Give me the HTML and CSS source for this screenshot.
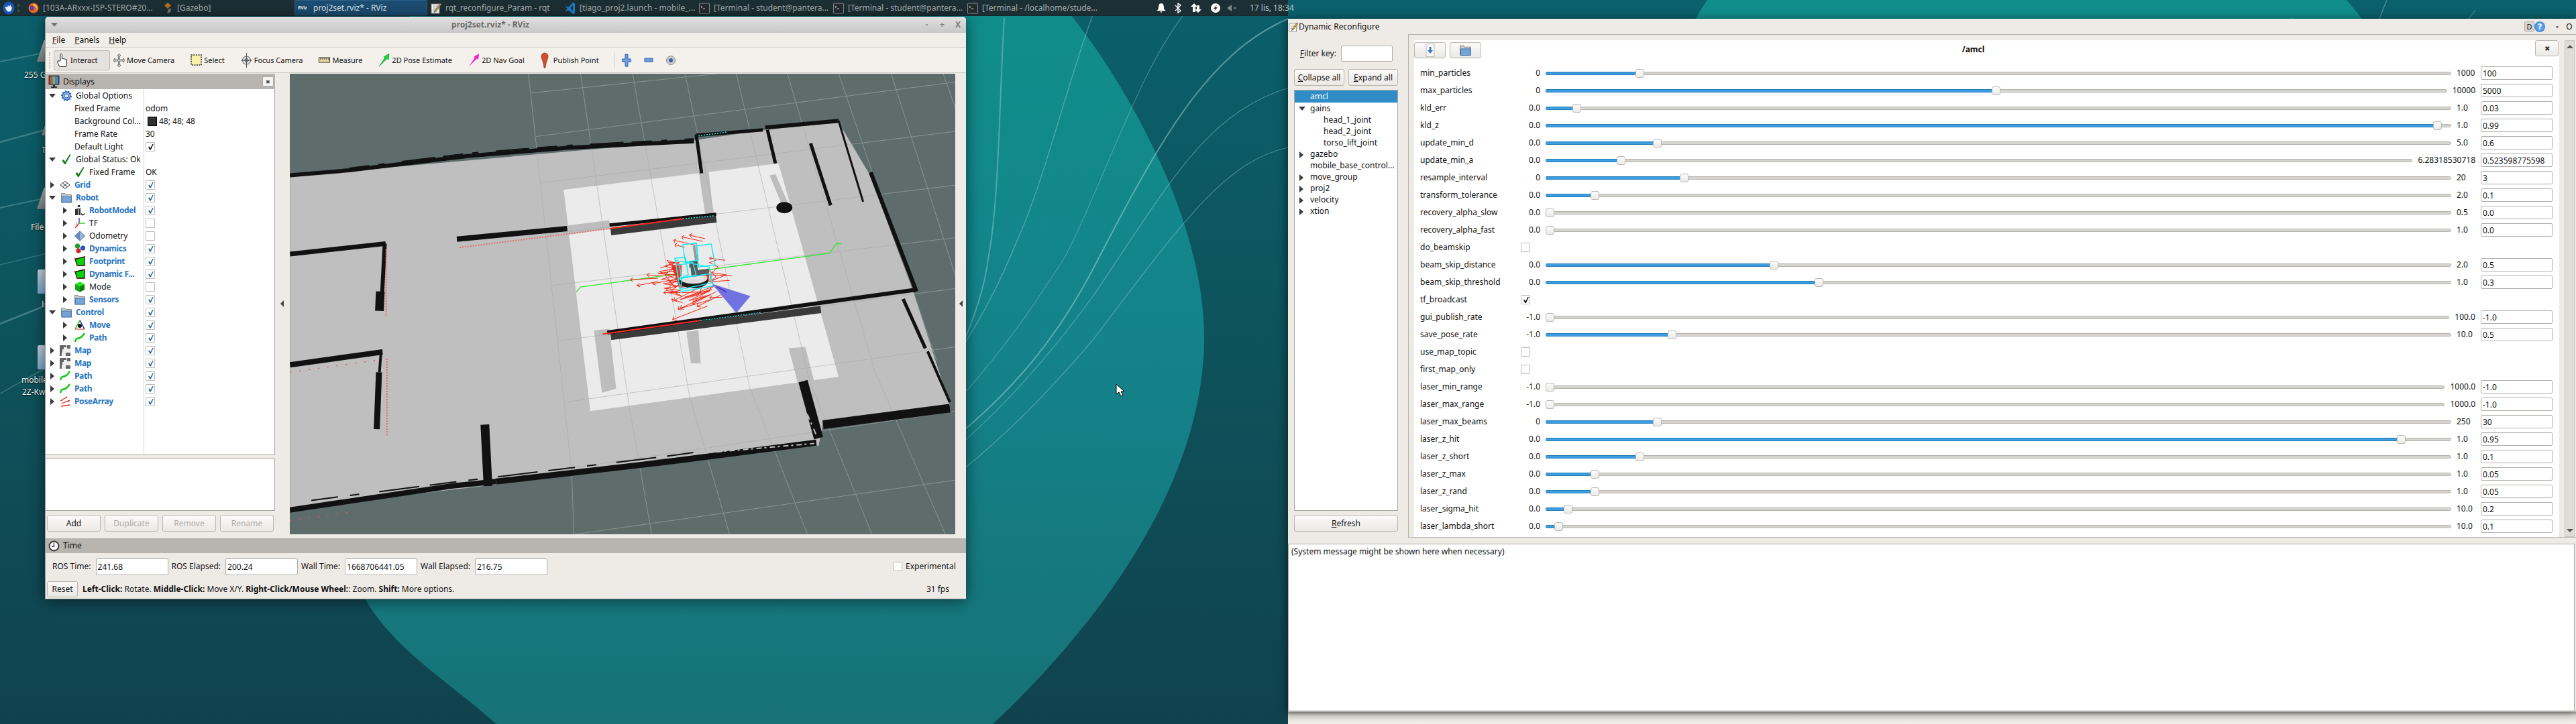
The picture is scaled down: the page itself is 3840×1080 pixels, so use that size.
FILE: index.html
```html
<!DOCTYPE html>
<html lang="en">
<head>
<meta charset="utf-8">
<title>Desktop</title>
<link rel="stylesheet" href="styles.css">
</head>
<body>
<svg class="defs" width="0" height="0">
<defs>
<linearGradient id="bgGrad" x1="0" y1="0" x2="0" y2="1"><stop offset="0" stop-color="#0a606c"/><stop offset=".55" stop-color="#0e5059"/><stop offset="1" stop-color="#10424e"/></linearGradient>
<linearGradient id="blobGrad" x1="0" y1="0" x2="0" y2="1"><stop offset="0" stop-color="#108e8b"/><stop offset=".5" stop-color="#14828a"/><stop offset="1" stop-color="#167276"/></linearGradient>
<symbol id="i-gear" viewBox="0 0 16 16"><circle cx="8" cy="8" r="6" fill="#8fb4e6" stroke="#2a62b5" stroke-width="1.5"/><circle cx="8" cy="8" r="7.2" fill="none" stroke="#2a62b5" stroke-width="1.6" stroke-dasharray="2 2.5"/><circle cx="8" cy="8" r="3" fill="#dbe8f8" stroke="#2a62b5"/></symbol>
<symbol id="i-check" viewBox="0 0 16 16"><path d="M1.5 9.5 4 8l2 3L13 0l1.5 1L6.5 15H5z" fill="#1c7f1c"/></symbol>
<symbol id="i-grid" viewBox="0 0 16 16"><path d="M8 2.5 15 8l-7 5.5L1 8zM4.5 5.3 11.5 10.8M11.500 5.300 4.500 10.800" fill="none" stroke="#333" stroke-width="1"/></symbol>
<symbol id="i-folder" viewBox="0 0 16 16"><path d="M.5 15V1.500h5l1 2h9V15z" fill="#c7cbd0" stroke="#777" stroke-width=".8"/><rect x="1.500" y="6" width="13.800" height="9" fill="#76a3d8" stroke="#3b6ea8" stroke-width=".8"/></symbol>
<symbol id="i-robot" viewBox="0 0 16 16"><path d="M5 0h3v2H5z" fill="#223"/><path d="M3 4h7v1H3zM1 6h4v9H1zM6 6h3v9H6z" fill="#333"/><path d="M10 11c1 3 3 3 5 1l1 1c-2 3-6 3-6 1z" fill="#444"/><rect x="4" y="2" width="5" height="1" fill="#669"/></symbol>
<symbol id="i-tf" viewBox="0 0 16 16"><path d="M7 8V0" stroke="#22c" stroke-width="1.300"/><path d="M7 8h9" stroke="#1c1" stroke-width="1.300"/><path d="M7 8 1 15" stroke="#e22" stroke-width="1.300"/><path d="M2 7l3 6M4 6l-2 6" stroke="#c33" stroke-width=".7" opacity=".7"/></symbol>
<symbol id="i-odom" viewBox="0 0 16 16"><path d="M8 1 15.500 8 8 15 .5 8z" fill="#9db4dc" stroke="#34568c"/><path d="M8 1v14L.5 8z" fill="#6b87ba"/></symbol>
<symbol id="i-dyn" viewBox="0 0 16 16"><path d="M1 2 4.500 0 8 2v4L4.500 8 1 6z" fill="#1f9d24"/><path d="M9 5l3.500-2L16 5v4l-3.500 2L9 9z" fill="#2c50c8"/><path d="M2.500 9 6 7l3.500 2v4L6 15l-3.500-2z" fill="#d22525"/></symbol>
<symbol id="i-foot" viewBox="0 0 16 16"><path d="M1 4.500 15 1v13H4z" fill="#0ad10a" stroke="#111" stroke-width="1.300"/><path d="M0 3h2v2H0zM14 0h2v2h-2zM14 13h2v2h-2zM3 13h2v2H3z" fill="#e11"/></symbol>
<symbol id="i-cube" viewBox="0 0 16 16"><path d="M8 .5 15 4v8l-7 3.500L1 12V4z" fill="#0fbf0f"/><path d="M1 4l7 3.500v8L1 12z" fill="#17a317"/><path d="M15 4 8 7.500v8l7-3.500z" fill="#087d08"/><path d="M8 .5 15 4 8 7.500 1 4z" fill="#22e822"/></symbol>
<symbol id="i-move" viewBox="0 0 16 16"><path d="M8 1 15 14H1z" fill="#fff" stroke="#d22" stroke-width="1"/><path d="M8 1 1 14" stroke="#1c1" stroke-width="1.500"/><path d="M8 1l7 13" stroke="#23c" stroke-width="1.500"/><circle cx="8" cy="9" r="3" fill="#111"/></symbol>
<symbol id="i-path" viewBox="0 0 16 16"><path d="M1 14c1-6 4-5 7-6s4-3 7-7" fill="none" stroke="#0bc90b" stroke-width="2.400"/></symbol>
<symbol id="i-map" viewBox="0 0 16 16"><rect width="16" height="16" fill="#eee"/><path d="M0 0h6v6H0zM6 0h4v3H6zM11 0h5v5h-5zM0 6h4v5H0zM9 11h7v5H9zM0 11h3v5H0z" fill="#666"/></symbol>
<symbol id="i-pose" viewBox="0 0 16 16"><path d="M1 7 11 1 9 3M3 11 15 6 12 8.500M2 15l13-2-3 1M1 7l3-1" fill="none" stroke="#e32212" stroke-width="1.300"/></symbol>
<symbol id="i-note" viewBox="0 0 16 16"><rect x="1" y="2" width="12" height="14" fill="#fff" stroke="#888"/><path d="M3 5h8M3 8h8M3 11h6" stroke="#999"/><path d="M6 12 14 1l2 1.500L8 13l-3 1.500z" fill="#d8a72a" stroke="#333" stroke-width=".6"/><path d="M14 1l2 1.500-1 1-2-1.500z" fill="#d466a8"/></symbol>
<symbol id="i-term" viewBox="0 0 16 16"><rect x=".5" y="1" width="15" height="15" rx="1" fill="#232b2e" stroke="#889"/><path d="M3 5l2 1.500L3 8M6 9h3" stroke="#cfd6d6" fill="none"/></symbol>
</defs>
</svg>

<svg class="wallpaper" width="3840" height="1080" viewBox="0 0 3840 1080">
<rect width="3840" height="1080" fill="url(#bgGrad)"/>
<g id="wp">
<path d="M625 0H1578C1680 120 1795 330 1795 503 1795 720 1640 930 1480 1080H740C660 1010 590 970 545 895 500 780 480 500 510 300 530 180 590 50 625 0Z" fill="url(#blobGrad)"/>
<g fill="none" stroke="#bfe6e4">
<path d="M1497 27C1490 130 1490 300 1473 386 1465 450 1440 520 1300 800" stroke-width="2" opacity=".35"/>
<path d="M1638 0C1600 90 1560 260 1520 350 1490 420 1440 560 1200 800" stroke-width="1.500" opacity=".32"/>
<path d="M1770 15C1700 100 1650 260 1590 379 1520 490 1420 640 1200 800" stroke-width="1.200" opacity=".3"/>
<path d="M1920 28C1800 80 1730 207 1630 400 1530 592 1400 680 1200 810" stroke-width="2" opacity=".42"/>
<path d="M1920 131C1800 170 1750 262 1630 441 1500 620 1380 720 1200 830" stroke-width="1.200" opacity=".35"/>
<path d="M1920 220C1830 240 1770 320 1630 506 1500 660 1380 760 1200 850" stroke-width="1.200" opacity=".35"/>
<path d="M0 92 70 78" stroke-width="2" opacity=".25"/>
<path d="M0 212 70 193" stroke-width="2.500" opacity=".25"/>
<path d="M0 310 70 295" stroke-width="2" opacity=".25"/>
<path d="M0 395 70 378" stroke-width="1.500" opacity=".2"/>
<path d="M0 483 70 455" stroke-width="2.500" opacity=".3"/>
<path d="M0 587 70 548" stroke-width="1.500" opacity=".25"/>
</g>
</g>
<use href="#wp" x="1920"/>
</svg>

<div class="desk-ic drive" style="left:55px;top:60px"></div>
<div class="desk-ic drive" style="left:62px;top:170px"></div>
<div class="desk-ic drive" style="left:55px;top:280px"></div>
<div class="desk-ic fold" style="left:56px;top:402px"></div>
<div class="desk-ic fold" style="left:56px;top:515px"></div>
<span class="desk-lbl" style="left:36px;top:104px">255 G</span>
<span class="desk-lbl" style="left:62px;top:216px">T</span>
<span class="desk-lbl" style="left:46px;top:331px">File</span>
<span class="desk-lbl" style="left:62px;top:446px">H</span>
<span class="desk-lbl" style="left:32px;top:559px">mobile</span>
<span class="desk-lbl" style="left:33px;top:577px">2Z-Kw</span>

<header class="taskbar">
  <svg class="logo" width="18" height="20" viewBox="0 0 18 20"><ellipse cx="9" cy="10" rx="8.500" ry="9.500" fill="#1556b8"/><path d="M4 10V8l2 1 0-3 2 3 1-4 1 3 2-3v4l2-1-1 5c-2 4-7 3-9-3z" fill="#fff"/></svg>
  <span class="grip"></span>
  <div class="task"><svg width="16" height="18" viewBox="0 0 16 18"><circle cx="8" cy="9" r="7.500" fill="#e8672a"/><path d="M8 3a6 6 0 0 1 4 10 5 5 0 0 0-6-7z" fill="#f9c23c"/><path d="M3 6c3-2 6 0 6 3s-3 5-6 3z" fill="#6a3aa2"/></svg><span>[103A-ARxxx-ISP-STERO#20...</span></div>
  <div class="task"><svg width="16" height="18" viewBox="0 0 16 18"><path d="M8 1l5 4-5 5-5-5z" fill="#b56f25"/><path d="M9 11l4-2-1 6-5 2z" fill="#7a7a7a"/></svg><span>[Gazebo]</span></div>
  <div class="task active"><span class="rv">RViz</span><span>proj2set.rviz* - RViz</span></div>
  <div class="task"><svg width="16" height="18"><use href="#i-note"/></svg><span>rqt_reconfigure_Param - rqt</span></div>
  <div class="task"><svg width="16" height="18" viewBox="0 0 16 18"><path d="M12 1 5 8 2 6 1 7l3 3-3 3 1 1 3-2 7 6 3-1V2zM12 5v8L8 9z" fill="#1f7fc8"/></svg><span>[tiago_proj2.launch - mobile_...</span></div>
  <div class="task"><svg width="16" height="18"><use href="#i-term"/></svg><span>[Terminal - student@pantera...</span></div>
  <div class="task"><svg width="16" height="18"><use href="#i-term"/></svg><span>[Terminal - student@pantera...</span></div>
  <div class="task"><svg width="16" height="18"><use href="#i-term"/></svg><span>[Terminal - /localhome/stude...</span></div>
  <div class="tray">
    <svg width="14" height="16" viewBox="0 0 14 16"><path d="M7 1c3 0 4 3 4 6s1 4 3 5H0c2-1 3-2 3-5s1-6 4-6zM5 13h4l-2 2z" fill="#fff"/></svg>
    <svg width="10" height="16" viewBox="0 0 10 16"><path d="M1 4l8 8-4 3V1l4 3-8 8" fill="none" stroke="#fff" stroke-width="1.400"/></svg>
    <svg width="18" height="16" viewBox="0 0 18 16"><path d="M6 1l5 5H8v8H4V6H1zM12 15l5-5h-3V4h-4v6H7z" fill="#fff"/></svg>
    <svg width="14" height="16" viewBox="0 0 14 16"><circle cx="7" cy="8" r="7" fill="#fff"/><path d="M9 3 4 9h3l-2 4 5-6H7z" fill="#1c2f35"/></svg>
    <svg class="vol" width="14" height="16" viewBox="0 0 14 16"><path d="M0 6h2l4-3v10l-4-3H0z" fill="#7b8a8c"/><path d="M9 6l4 4M13 6l-4 4" stroke="#7b8a8c"/></svg>
    <span class="clock">17 lis, 18:34</span>
  </div>
</header>

<section class="win rviz">
  <div class="titlebar"><i class="tri-d dim"></i><b class="ttl">proj2set.rviz* - RViz</b><span class="wbtns"><i>-</i><i>+</i><i>X</i></span></div>
  <nav class="menu"><span><u>F</u>ile</span><span><u>P</u>anels</span><span><u>H</u>elp</span></nav>
  <div class="tools">
    <span class="hgrip"></span>
    <div class="tool act"><svg width="17" height="22" viewBox="0 0 17 22"><path d="M5 12V2.500a1.200 1.200 0 0 1 2.400 0V9l1-.5 2 .3 2 .5 2 .7V17l-1 3.500H4L1 15V12z" fill="#fff" stroke="#222"/></svg>Interact</div>
    <div class="tool"><svg width="17" height="22" viewBox="0 0 17 22"><path d="M8.500 1 11 4H9.500v6H15v-2l2 3-2 3v-2H9.500v6H11l-2.500 3L6 18h1.500v-6H2v2l-2-3 2-3v2h5.500V4H6z" fill="#d9dbe0" stroke="#555" stroke-width=".8"/></svg>Move Camera</div>
    <div class="tool"><svg width="17" height="18" viewBox="0 0 17 18"><rect x="1" y="1" width="15" height="15" fill="#f8f0a8" stroke="#222" stroke-dasharray="2 1.500" stroke-width="1.500"/></svg>Select</div>
    <div class="tool"><svg width="17" height="22" viewBox="0 0 17 22"><circle cx="8.500" cy="11" r="6" fill="#dfe1e6" stroke="#555"/><path d="M8.500 0v22M0 11h17M4 11h9M8.500 6v10" stroke="#555"/><circle cx="8.500" cy="11" r="2.500" fill="none" stroke="#555"/></svg>Focus Camera</div>
    <div class="tool"><svg width="17" height="18" viewBox="0 0 17 18"><rect x=".5" y="5" width="16" height="7" fill="#e9d9a0" stroke="#333"/><path d="M3 5v3M6 5v3M9 5v3M12 5v3M15 5v3" stroke="#333"/></svg>Measure</div>
    <div class="tool"><svg width="17" height="20" viewBox="0 0 17 20"><path d="M1 19 10 6 8 5l8-5-1 9-2-1.500z" fill="#12d83a" stroke="#0a6a20" stroke-width=".5"/></svg>2D Pose Estimate</div>
    <div class="tool"><svg width="17" height="20" viewBox="0 0 17 20"><path d="M1 19 10 6 8 5l8-5-1 9-2-1.500z" fill="#ef1fd2"/></svg>2D Nav Goal</div>
    <div class="tool pin"><svg width="12" height="24" viewBox="0 0 12 24"><path d="M6 1a5 5 0 0 1 5 5c0 4-3 6-4 17H5C4 12 1 10 1 6a5 5 0 0 1 5-5z" fill="#d5502a" stroke="#6a2510" stroke-width=".7"/></svg>Publish Point</div>
    <span class="sep"></span>
    <svg class="zoom" width="14" height="20" viewBox="0 0 14 20"><path d="M5 1h4v7h5v4H9v7H5v-7H0V8h5z" fill="#6f9fe0" stroke="#2c5ea8"/></svg>
    <svg class="zoom" width="14" height="20" viewBox="0 0 14 20"><rect x="1" y="7" width="12" height="5" fill="#6f9fe0" stroke="#2c5ea8"/></svg>
    <svg class="zoom" width="14" height="20" viewBox="0 0 14 20"><circle cx="7" cy="10" r="6.500" fill="#c8ccd2" stroke="#888"/><circle cx="7" cy="10" r="3" fill="#3d5f9c"/></svg>
  </div>

  <div class="rv-main">
    <aside class="dock">
      <div class="dockhead"><svg width="17" height="20" viewBox="0 0 17 20"><rect x=".5" y=".5" width="16" height="14" fill="#333"/><rect x="2" y="2" width="4.300" height="11" fill="#d04b4b"/><rect x="6.300" y="2" width="4.300" height="11" fill="#5fc06a"/><rect x="10.600" y="2" width="4.400" height="11" fill="#5a78d0"/><path d="M7 15h3v2h3v2H4v-2h3z" fill="#333"/></svg><span>Displays</span><i class="x-btn">✖</i></div>
      <div class="tree">
        <div class="row"><div class="c1 in0"><i class="exp tri-d"></i><svg class="ic"><use href="#i-gear"/></svg>Global Options</div><div class="c2"></div></div>
        <div class="row"><div class="c1 prop">Fixed Frame</div><div class="c2">odom</div></div>
        <div class="row"><div class="c1 prop">Background Col...</div><div class="c2"><i class="swatch"></i>48; 48; 48</div></div>
        <div class="row"><div class="c1 prop">Frame Rate</div><div class="c2">30</div></div>
        <div class="row"><div class="c1 prop">Default Light</div><div class="c2"><i class="cb k"></i></div></div>
        <div class="row"><div class="c1 in0"><i class="exp tri-d"></i><svg class="ic"><use href="#i-check"/></svg>Global Status: Ok</div><div class="c2"></div></div>
        <div class="row"><div class="c1 prop"><svg class="ic ic2"><use href="#i-check"/></svg>Fixed Frame</div><div class="c2">OK</div></div>
        <div class="row"><div class="c1 in0 on"><i class="exp tri-r"></i><svg class="ic"><use href="#i-grid"/></svg>Grid</div><div class="c2"><i class="cb b"></i></div></div>
        <div class="row"><div class="c1 in0 on"><i class="exp tri-d"></i><svg class="ic"><use href="#i-folder"/></svg>Robot</div><div class="c2"><i class="cb b"></i></div></div>
        <div class="row"><div class="c1 in1 on"><i class="exp tri-r"></i><svg class="ic"><use href="#i-robot"/></svg>RobotModel</div><div class="c2"><i class="cb b"></i></div></div>
        <div class="row"><div class="c1 in1"><i class="exp tri-r"></i><svg class="ic"><use href="#i-tf"/></svg>TF</div><div class="c2"><i class="cb"></i></div></div>
        <div class="row"><div class="c1 in1"><i class="exp tri-r"></i><svg class="ic"><use href="#i-odom"/></svg>Odometry</div><div class="c2"><i class="cb"></i></div></div>
        <div class="row"><div class="c1 in1 on"><i class="exp tri-r"></i><svg class="ic"><use href="#i-dyn"/></svg>Dynamics</div><div class="c2"><i class="cb b"></i></div></div>
        <div class="row"><div class="c1 in1 on"><i class="exp tri-r"></i><svg class="ic"><use href="#i-foot"/></svg>Footprint</div><div class="c2"><i class="cb b"></i></div></div>
        <div class="row"><div class="c1 in1 on"><i class="exp tri-r"></i><svg class="ic"><use href="#i-foot"/></svg>Dynamic F...</div><div class="c2"><i class="cb b"></i></div></div>
        <div class="row"><div class="c1 in1"><i class="exp tri-r"></i><svg class="ic"><use href="#i-cube"/></svg>Mode</div><div class="c2"><i class="cb"></i></div></div>
        <div class="row"><div class="c1 in1 on"><i class="exp tri-r"></i><svg class="ic"><use href="#i-folder"/></svg>Sensors</div><div class="c2"><i class="cb b"></i></div></div>
        <div class="row"><div class="c1 in0 on"><i class="exp tri-d"></i><svg class="ic"><use href="#i-folder"/></svg>Control</div><div class="c2"><i class="cb b"></i></div></div>
        <div class="row"><div class="c1 in1 on"><i class="exp tri-r"></i><svg class="ic"><use href="#i-move"/></svg>Move</div><div class="c2"><i class="cb b"></i></div></div>
        <div class="row"><div class="c1 in1 on"><i class="exp tri-r"></i><svg class="ic"><use href="#i-path"/></svg>Path</div><div class="c2"><i class="cb b"></i></div></div>
        <div class="row"><div class="c1 in0 on"><i class="exp tri-r"></i><svg class="ic"><use href="#i-map"/></svg>Map</div><div class="c2"><i class="cb b"></i></div></div>
        <div class="row"><div class="c1 in0 on"><i class="exp tri-r"></i><svg class="ic"><use href="#i-map"/></svg>Map</div><div class="c2"><i class="cb b"></i></div></div>
        <div class="row"><div class="c1 in0 on"><i class="exp tri-r"></i><svg class="ic"><use href="#i-path"/></svg>Path</div><div class="c2"><i class="cb b"></i></div></div>
        <div class="row"><div class="c1 in0 on"><i class="exp tri-r"></i><svg class="ic"><use href="#i-path"/></svg>Path</div><div class="c2"><i class="cb b"></i></div></div>
        <div class="row"><div class="c1 in0 on"><i class="exp tri-r"></i><svg class="ic"><use href="#i-pose"/></svg>PoseArray</div><div class="c2"><i class="cb b"></i></div></div>
        <div class="treefill"><div class="c1"></div></div>
      </div>
      <div class="vgrip"></div>
      <div class="descbox"></div>
      <div class="dockbtns"><button class="btn">Add</button><button class="btn dis">Duplicate</button><button class="btn dis">Remove</button><button class="btn dis">Rename</button></div>
    </aside>
    <div class="split"><i class="tri-l"></i></div>
    <div class="viewport">
      <svg class="map" width="992" height="687" viewBox="431 110 992 687">
        <rect x="431" y="110" width="992" height="687" fill="#5e6d6c"/>
        <g transform="translate(420 100) scale(.6633 .4464)">
          <polygon points="17,365 925,245 1085,210 1250,185 1320,360 1420,760 1500,1130 1215,1190 1205,1265 850,1310 480,1395 17,1475" fill="#bfbfbf"/>
          <polygon points="632,410 1115,322 1250,1035 692,1150" fill="#ebebeb"/>
          <g fill="#bdbdbd">
            <polygon points="936,352 958,348 968,488 950,490"/><polygon points="1095,362 1108,358 1135,450 1120,452"/>
            <polygon points="700,880 735,875 750,1075 718,1088"/><polygon points="908,885 935,880 940,990 918,990"/>
            <polygon points="1138,940 1175,935 1195,1050 1158,1055"/><polygon points="640,530 735,512 735,540 645,560"/>
          </g>
          <g fill="none" stroke="#a6adad" stroke-width="1" opacity=".6">
            <path d="M553 22 650 1350 655 1562"/><path d="M670 22 780 1140 830 1562"/><path d="M787 22 915 1100 1005 1562"/><path d="M905 22 1050 1070 1180 1562"/><path d="M1020 22 1185 1050 1325 1562"/><path d="M1135 22 1330 1010 1490 1562"/><path d="M1250 22 1470 980"/><path d="M1368 22 1513 700"/><path d="M1485 22 1513 140"/>
            <path d="M558 87 1513 -60"/><path d="M570 232 1513 50"/><path d="M580 387 1513 215"/><path d="M590 560 1513 395"/><path d="M605 730 1513 570"/><path d="M620 915 1513 740"/><path d="M635 1120 1513 935"/><path d="M650 1340 1513 1150"/><path d="M655 1562 1513 1380"/>
          </g>
          <g fill="none" stroke="#111">
            <polyline stroke-width="6" points="17,362 150,345 420,297 640,270 925,248"/>
            <polyline stroke-width="2" stroke-dasharray="30 14 9 26 50 12" points="150,338 420,288 640,262 925,240"/>
            <polyline stroke-width="5" points="930,228 1080,210"/><polyline stroke-width="6" points="1085,202 1250,180"/>
            <polyline stroke-width="5" points="930,225 942,355"/><polyline stroke-width="5" points="1090,210 1108,322"/>
            <polyline stroke-width="3" points="1250,180 1305,450"/><polyline stroke-width="5" points="1187,255 1232,462"/>
            <polyline stroke-width="6" points="1322,352 1425,750"/><polyline stroke-width="5" points="1395,775 1445,940"/><polyline stroke-width="4" points="1450,950 1500,1120"/>
            <polyline stroke-width="7" points="17,625 232,590"/><polyline stroke-width="6" points="230,590 224,760"/><polyline stroke-width="13" points="220,750 218,815"/>
            <polyline stroke-width="8" points="17,995 225,952"/><polyline stroke-width="9" points="217,1020 212,1210"/><polyline stroke-width="4" points="222,945 218,1020"/>
            <polyline stroke-width="13" points="455,1195 462,1400"/>
            <polyline stroke-width="8" points="17,1480 380,1400 480,1385"/><polyline stroke-width="9" points="480,1385 850,1322 1200,1255"/>
            <polyline stroke-width="2" stroke-dasharray="40 18 14 30 60 16" points="65,1448 380,1388 850,1303 940,1285"/>
            <polyline stroke-width="14" points="1170,1050 1205,1240"/><polyline stroke-width="13" points="1215,1195 1500,1140"/>
            <polyline stroke-width="8" points="392,575 640,540"/>
          </g>
          <polyline fill="none" stroke="#bfbfbf" stroke-width="2" stroke-dasharray="8 4 3 5" points="945,1290 1195,1258"/>
          <polyline fill="none" stroke="#bfbfbf" stroke-width="2" stroke-dasharray="9 5 3 7" points="1165,1110 1200,1230"/>
          <polyline fill="none" stroke="#3a3a3a" stroke-width="11" points="738,550 975,507"/>
          <polyline fill="none" stroke="#111" stroke-width="5" points="735,528 975,492"/>
          <polyline fill="none" stroke="#3a3a3a" stroke-width="11" points="738,900 1210,810"/>
          <polyline fill="none" stroke="#111" stroke-width="6" points="730,887 1210,788 1420,745"/>
          <ellipse cx="1128" cy="470" rx="18" ry="19" fill="#111"/>
          <g fill="none" stroke-dasharray="2 2">
            <path d="M398 603 735 540" stroke="#e86a6a" stroke-width="2"/>
            <path d="M735 540 900 507" stroke="#ff2a2a" stroke-width="2" stroke-dasharray="none"/>
            <path d="M720 892 940 847" stroke="#ff2a2a" stroke-width="2" stroke-dasharray="none"/>
            <path d="M940 847 1075 820M900 507 970 497M935 230 1000 217" stroke="#25e0e0" stroke-width="1.500"/>
            <path d="M233 610V835M235 975V1235" stroke="#e86a6a" stroke-width="2"/>
            <path d="M17 1020 210 980M17 1515 165 1485" stroke="#d85a5a" stroke-width="1.500" stroke-dasharray="2 12"/>
          </g>
          <polyline fill="none" stroke="#37e637" stroke-width="1.500" points="660,752 670,735 1230,622 1245,590 1257,590"/>
        </g>
        <g transform="translate(900 320) scale(.3333)">
          <polygon points="480,310 653,365 590,440" fill="#6a6ae0" opacity=".95"/>
          <path d="M500 322 545 346" stroke="#5a2a9a" stroke-width="1.500"/>
          <g fill="none" stroke="#f8200f" stroke-width="1">
            <path d="M450 108 380 92l14-8M380 92l10 12"/><path d="M440 120 345 100l12-6M345 100l8 12"/><path d="M420 140 310 115l12-6M310 115l6 13M370 150 315 135l10-6M315 135l6 12"/>
            <path d="M540 205 470 195l12-5M470 195l8 9"/><path d="M570 275 470 270l12-5M470 270l10 8M560 295 480 300l10-8M480 300l8 8"/>
            <path d="M240 285 115 292l14-10M115 292l12 8M260 275 190 270l12-8M190 270l10 10M240 300 145 318l12-10M145 318l14 6M320 290 215 310l10-10M215 310l14 6"/>
            <path d="M528 370 470 372l12-8M470 372l10 10M500 345 395 400l3-14M395 400l16 0M445 370 330 425l3-14M330 425l16 2M520 360 415 412l3-14M415 412l16 2M480 380 340 420l4-14M340 420l14 5M350 395 300 378M300 378l6 12M330 350 265 350l10-8M265 350l10 8"/>
            <path d="M460 410 305 470l6-16M305 470l20 4M420 330 310 385l4-14M310 385l14 4"/>
            <polyline points="250,240 320,215 270,230 330,250 240,265 325,270 255,290 330,300 262,310 335,320 268,330 340,340 290,350 345,365 300,340 350,300 280,205 340,225 300,250 340,280 290,300 320,330 270,270 335,215 290,215 330,240 245,255 325,290 275,340 340,350"/>
            <polyline points="345,350 470,345 360,370 480,335 380,385 470,360 400,390 490,320 340,380 420,360 470,250 500,280 470,300 545,270 480,260 510,235 470,215 500,205"/>
          </g>
          <path d="M300 225 335 330 470 300 465 235z" fill="#f01b0a" opacity=".85"/>
          <ellipse cx="398" cy="298" rx="65" ry="32" fill="#1b1b1b"/>
          <ellipse cx="398" cy="285" rx="62" ry="25" fill="#dcdcdc"/>
          <rect x="345" y="220" width="95" height="70" fill="#e6e6e6"/>
          <polygon points="385,235 470,225 465,270 390,280" fill="#5b5b5b"/>
          <polygon points="380,205 420,205 420,235 380,238" fill="#555"/>
          <polygon points="358,142 405,135 418,205 365,212" fill="#e8e8e8"/>
          <polygon points="395,140 405,135 418,205 405,208" fill="#999"/>
          <polygon points="415,225 495,222 480,240 418,248" fill="#f2f2f2"/>
          <g fill="none" stroke="#1fe6ee" stroke-width="1.500">
            <polygon points="350,135 412,128 420,205 362,212"/><polygon points="412,140 478,132 495,225 420,235"/>
            <polygon points="315,195 362,192 375,270 330,290"/><polygon points="318,205 340,345 485,320 470,235"/>
            <polygon points="335,225 395,215 410,270 345,285"/><polygon points="345,285 470,265 480,305 342,335"/>
          </g>
        </g>
      </svg>
    </div>
    <div class="split right"><i class="tri-l"></i></div>
  </div>

  <div class="hgrip2"></div>
  <div class="timehead"><svg width="17" height="17" viewBox="0 0 17 17"><circle cx="8.500" cy="8.500" r="7" fill="#fff" stroke="#333" stroke-width="1.800"/><path d="M8.500 3.500v5.500H5" fill="none" stroke="#222" stroke-width="1.300"/></svg><span>Time</span></div>
  <div class="timerow">
    <label>ROS Time:</label><input class="fld" value="241.68">
    <label>ROS Elapsed:</label><input class="fld" value="200.24">
    <label>Wall Time:</label><input class="fld" value="1668706441.05">
    <label>Wall Elapsed:</label><input class="fld" value="216.75">
    <span class="exp-box"><i class="cb"></i>Experimental</span>
  </div>
  <div class="status"><button class="btn reset">Reset</button><span class="hint"><b>Left-Click:</b> Rotate. <b>Middle-Click:</b> Move X/Y. <b>Right-Click/Mouse Wheel:</b>: Zoom. <b>Shift:</b> More options.</span><span class="fps">31 fps</span></div>
</section>

<section class="win dr">
  <div class="drtitle"><svg width="14" height="16"><use href="#i-note"/></svg><span>Dynamic Reconfigure</span><span class="drbtns"><i class="d">D</i><i class="q">?</i><i class="m">-</i><i class="o">O</i></span></div>
  <div class="drbody">
    <aside class="side">
      <div class="filter"><label><u>F</u>ilter key:</label><input class="fld" value=""></div>
      <div class="sidebtns"><button class="btn"><u>C</u>ollapse all</button><button class="btn"><u>E</u>xpand all</button></div>
      <ul class="nodes">
        <li class="sel">amcl</li>
        <li><i class="tri-d"></i>gains</li>
        <li class="kid">head_1_joint</li>
        <li class="kid">head_2_joint</li>
        <li class="kid">torso_lift_joint</li>
        <li><i class="tri-r"></i>gazebo</li>
        <li>mobile_base_control...</li>
        <li><i class="tri-r"></i>move_group</li>
        <li><i class="tri-r"></i>proj2</li>
        <li><i class="tri-r"></i>velocity</li>
        <li><i class="tri-r"></i>xtion</li>
      </ul>
      <button class="btn refresh"><u>R</u>efresh</button>
    </aside>
    <div class="group">
      <div class="params">
        <div class="ptop">
          <button class="btn ib"><svg width="14" height="20" viewBox="0 0 14 20"><path d="M1 .5h12v19H1z" fill="#f7f7f7" stroke="#bbb"/><path d="M5.500 5h3v5H11l-4 5-4-5h2.500z" fill="#3a78c8"/></svg></button>
          <button class="btn ib"><svg width="17" height="18" viewBox="0 0 16 16"><use href="#i-folder"/></svg></button>
          <b class="ptitle">/amcl</b>
          <button class="btn ib close">✖</button>
        </div>
        <div class="p"><span class="pn">min_particles</span><span class="mn">0</span><div class="sl" style="--v:.1"><i></i><b></b></div><span class="mx">1000</span><input class="fld pv" value="100"></div>
        <div class="p"><span class="pn">max_particles</span><span class="mn">0</span><div class="sl" style="--v:.5"><i></i><b></b></div><span class="mx">10000</span><input class="fld pv" value="5000"></div>
        <div class="p"><span class="pn">kld_err</span><span class="mn">0.0</span><div class="sl" style="--v:.03"><i></i><b></b></div><span class="mx">1.0</span><input class="fld pv" value="0.03"></div>
        <div class="p"><span class="pn">kld_z</span><span class="mn">0.0</span><div class="sl" style="--v:.99"><i></i><b></b></div><span class="mx">1.0</span><input class="fld pv" value="0.99"></div>
        <div class="p"><span class="pn">update_min_d</span><span class="mn">0.0</span><div class="sl" style="--v:.12"><i></i><b></b></div><span class="mx">5.0</span><input class="fld pv" value="0.6"></div>
        <div class="p"><span class="pn">update_min_a</span><span class="mn">0.0</span><div class="sl" style="--v:.083"><i></i><b></b></div><span class="mx">6.28318530718</span><input class="fld pv" value="0.523598775598"></div>
        <div class="p"><span class="pn">resample_interval</span><span class="mn">0</span><div class="sl" style="--v:.15"><i></i><b></b></div><span class="mx">20</span><input class="fld pv" value="3"></div>
        <div class="p"><span class="pn">transform_tolerance</span><span class="mn">0.0</span><div class="sl" style="--v:.05"><i></i><b></b></div><span class="mx">2.0</span><input class="fld pv" value="0.1"></div>
        <div class="p"><span class="pn">recovery_alpha_slow</span><span class="mn">0.0</span><div class="sl" style="--v:0"><i></i><b></b></div><span class="mx">0.5</span><input class="fld pv" value="0.0"></div>
        <div class="p"><span class="pn">recovery_alpha_fast</span><span class="mn">0.0</span><div class="sl" style="--v:0"><i></i><b></b></div><span class="mx">1.0</span><input class="fld pv" value="0.0"></div>
        <div class="p"><span class="pn">do_beamskip</span><i class="cb"></i></div>
        <div class="p"><span class="pn">beam_skip_distance</span><span class="mn">0.0</span><div class="sl" style="--v:.25"><i></i><b></b></div><span class="mx">2.0</span><input class="fld pv" value="0.5"></div>
        <div class="p"><span class="pn">beam_skip_threshold</span><span class="mn">0.0</span><div class="sl" style="--v:.3"><i></i><b></b></div><span class="mx">1.0</span><input class="fld pv" value="0.3"></div>
        <div class="p"><span class="pn">tf_broadcast</span><i class="cb k"></i></div>
        <div class="p"><span class="pn">gui_publish_rate</span><span class="mn">-1.0</span><div class="sl" style="--v:0"><i></i><b></b></div><span class="mx">100.0</span><input class="fld pv" value="-1.0"></div>
        <div class="p"><span class="pn">save_pose_rate</span><span class="mn">-1.0</span><div class="sl" style="--v:.136"><i></i><b></b></div><span class="mx">10.0</span><input class="fld pv" value="0.5"></div>
        <div class="p"><span class="pn">use_map_topic</span><i class="cb"></i></div>
        <div class="p"><span class="pn">first_map_only</span><i class="cb"></i></div>
        <div class="p"><span class="pn">laser_min_range</span><span class="mn">-1.0</span><div class="sl" style="--v:0"><i></i><b></b></div><span class="mx">1000.0</span><input class="fld pv" value="-1.0"></div>
        <div class="p"><span class="pn">laser_max_range</span><span class="mn">-1.0</span><div class="sl" style="--v:0"><i></i><b></b></div><span class="mx">1000.0</span><input class="fld pv" value="-1.0"></div>
        <div class="p"><span class="pn">laser_max_beams</span><span class="mn">0</span><div class="sl" style="--v:.12"><i></i><b></b></div><span class="mx">250</span><input class="fld pv" value="30"></div>
        <div class="p"><span class="pn">laser_z_hit</span><span class="mn">0.0</span><div class="sl" style="--v:.95"><i></i><b></b></div><span class="mx">1.0</span><input class="fld pv" value="0.95"></div>
        <div class="p"><span class="pn">laser_z_short</span><span class="mn">0.0</span><div class="sl" style="--v:.1"><i></i><b></b></div><span class="mx">1.0</span><input class="fld pv" value="0.1"></div>
        <div class="p"><span class="pn">laser_z_max</span><span class="mn">0.0</span><div class="sl" style="--v:.05"><i></i><b></b></div><span class="mx">1.0</span><input class="fld pv" value="0.05"></div>
        <div class="p"><span class="pn">laser_z_rand</span><span class="mn">0.0</span><div class="sl" style="--v:.05"><i></i><b></b></div><span class="mx">1.0</span><input class="fld pv" value="0.05"></div>
        <div class="p"><span class="pn">laser_sigma_hit</span><span class="mn">0.0</span><div class="sl" style="--v:.02"><i></i><b></b></div><span class="mx">10.0</span><input class="fld pv" value="0.2"></div>
        <div class="p"><span class="pn">laser_lambda_short</span><span class="mn">0.0</span><div class="sl" style="--v:.01"><i></i><b></b></div><span class="mx">10.0</span><input class="fld pv" value="0.1"></div>
      </div>
      <div class="vsb"><i class="tri-u"></i><span class="track"></span><i class="tri-d2"></i></div>
    </div>
  </div>
  <div class="msg">(System message might be shown here when necessary)</div>
</section>
<div class="under"></div>

<svg class="cursor" width="13" height="20" viewBox="0 0 13 20"><path d="M1 1v15l4-3 3 6 3-1-3-6h5z" fill="#fff" stroke="#000"/></svg>
</body>
</html>
```

FILE: styles.css
```css
*{box-sizing:border-box}
html,body{margin:0;padding:0;width:3840px;height:1080px;overflow:hidden}
body{position:relative;font:12px/16px "Noto Sans",sans-serif;color:#111;background:#0e5059}
i{font-style:normal}
.defs{position:absolute}
.wallpaper{position:absolute;left:0;top:0}
.cursor{position:absolute;left:1663px;top:572px}

.desk-ic{position:absolute;width:30px;height:36px}
.drive{background:linear-gradient(#b8c0c2,#7b8587);clip-path:polygon(35% 0,70% 0,100% 100%,0 100%);height:32px}
.fold{background:linear-gradient(#c9d6e2,#7ea8cc);border-radius:3px 3px 0 0}
.desk-lbl{position:absolute;color:#f0f4f4;text-shadow:0 1px 2px #000;font-size:12px;white-space:nowrap}

.taskbar{position:absolute;left:0;top:0;width:1920px;height:24px;background:#1c2f35;display:flex;align-items:center;color:#a4adae;font-size:12px;border-bottom:1px solid #15252a}
.logo{margin-left:4px;flex:none}
.grip{width:3px;height:12px;margin:0 10px 0 4px;border-left:3px dotted #3d4c50}
.task{width:198px;height:22px;margin-right:2px;padding-left:3px;display:flex;align-items:center;gap:6px;flex:none;white-space:nowrap;overflow:hidden}
.task svg{flex:none}
.task.active{background:#1d4d72;border:1px solid #29618d;border-radius:2px;color:#dce6ea;padding-left:4px;gap:7px;height:23px}
.rv{font-size:7px;font-weight:700;width:16px;color:#e6e6e6;letter-spacing:-.3px}
.tray{margin-left:85px;display:flex;align-items:center;gap:13px;flex:none}
.tray .vol{margin-left:-2px}
.clock{margin-left:6px;color:#b8c2c3;width:67px;white-space:nowrap}

.win{position:absolute;background:#eeebe7;box-shadow:0 2px 22px rgba(0,0,0,.55)}
.rviz{left:67px;top:25px;width:1373px;height:869px;display:flex;flex-direction:column;border-radius:5px 5px 0 0;border-left:1px solid #999;border-bottom:1px solid #8d8d8d}
.titlebar{height:24px;flex:none;background:linear-gradient(#e0e0e0,#c8c8c8);display:flex;align-items:center;position:relative;padding-left:8px;border-radius:5px 5px 0 0;color:#6c6c6c}
.ttl{position:absolute;left:605px;top:4px;white-space:nowrap;font-size:12px}
.wbtns{margin-left:auto;display:flex;gap:16px;margin-right:9px;font-weight:700;font-size:12px;color:#7c7c7c}
.wbtns i{width:7px;text-align:center}
.tri-d,.exp.tri-d{display:inline-block;width:0;height:0;border:5px solid transparent;border-top:6px solid #3a3a3a;border-bottom:0}
.dim{border-top-color:#777!important}
.tri-r{display:inline-block;width:0;height:0;border:5px solid transparent;border-left:6px solid #3a3a3a;border-right:0}
.tri-l{display:inline-block;width:0;height:0;border:5px solid transparent;border-right:5px solid #444;border-left:0}
.menu{height:22px;flex:none;background:#f1eee9;display:flex;align-items:center;gap:14px;padding-left:10px;border-bottom:1px solid #d5d2cd}
.tools{height:38px;flex:none;background:#f4f1ec;display:flex;align-items:center;padding-left:5px;border-bottom:1px solid #c9c6c2;font-size:11px}
.hgrip{width:3px;height:24px;border-left:2px dotted #c4c1bc;margin-right:4px}
.tool{display:flex;align-items:center;gap:3px;margin-right:24px;white-space:nowrap;height:30px;flex:none}
.tool.act{width:84px;background:#e5e2de;border:1px solid #bbb8b3;border-radius:3px;padding-left:4px;margin-right:5px}
.tool.pin{margin-right:22px;gap:7px}
.sep{width:1px;height:24px;background:#cfccc7;margin-right:11px}
.zoom{margin-right:19px}

.rv-main{display:flex;height:688px;flex:none}
.dock{width:342px;flex:none;display:flex;flex-direction:column;padding-top:1px}
.dockhead{height:23px;background:#b8b4b0;display:flex;align-items:center;padding-left:4px;gap:5px;position:relative;flex:none}
.x-btn{margin-left:auto;margin-right:2px;width:17px;height:15px;background:#f6f4f1;border:1px solid #aaa;border-radius:2px;font-size:8px;line-height:13px;text-align:center;color:#444}
.tree{height:546px;flex:none;background:#fff;border-right:1px solid #aaa8a4;border-bottom:1px solid #aaa8a4;display:flex;flex-direction:column}
.row{height:19px;display:flex;flex:none;align-items:center;white-space:nowrap}
.c1{width:147px;height:100%;flex:none;display:flex;align-items:center;border-right:1px solid #d8d6d3}
.c2{padding-left:2px;display:flex;align-items:center;height:100%}
.in0{padding-left:4px}
.in1{padding-left:23px}
.prop{padding-left:43px}
.exp{flex:none;margin-right:8px}
.exp.tri-r{margin:0 8px 0 3px}
.exp.tri-d{margin:0 8px 0 1px}
.in1 .exp.tri-r{margin:0 11px 0 3px}
.ic{width:16px;height:16px;flex:none;margin-right:6px}
.in1 .ic{margin-right:6px}
.ic2{margin-right:6px}
.on{color:#2a75c4;font-weight:700;letter-spacing:-.35px}
.treefill{flex:1;display:flex}
.swatch{width:14px;height:14px;background:#303030;border:1px solid #000;margin:0 3px 0 3px}
.cb{display:block;flex:none;width:14px;height:14px;background:#fff;border:1px solid #bdbbb7;border-radius:1px;position:relative}
.cb.k::after,.cb.b::after{content:"";position:absolute;left:3px;top:2px;width:8px;height:9px;background:#111;clip-path:polygon(0 50%,20% 45%,40% 72%,82% 0,100% 0,48% 100%,28% 100%)}
.cb.b::after{background:#2a68ae}
.vgrip{height:5px;flex:none}
.descbox{height:78px;flex:none;background:#fff;border:1px solid #aaa8a4;border-left:0}
.dockbtns{display:flex;gap:6px;padding:6px 2px 0 2px}
.btn{font:12px/16px "Noto Sans",sans-serif;color:#111;background:linear-gradient(#fbfaf8,#ebe9e6);border:1px solid #b9b6b1;border-radius:3px;padding:0;height:25px;cursor:default}
.dockbtns .btn{width:80px}
.btn.dis{color:#aeaba8}
.split{width:22px;flex:none;display:flex;align-items:center;padding-left:8px}
.split.right{width:16px;padding-left:5px}
.viewport{width:993px;flex:none;padding-top:1px;height:688px}
.map{display:block}
.map *{vector-effect:non-scaling-stroke}
.hgrip2{height:6px;flex:none}
.timehead{height:22px;flex:none;background:#b8b4b0;display:flex;align-items:center;gap:5px;padding-left:4px}
.timerow{height:40px;flex:none;display:flex;align-items:center;padding:0 0 0 10px;white-space:nowrap}
.timerow label{margin-right:7px}
.fld{font:12px "Noto Sans",sans-serif;color:#111;background:#fff;border:1px solid #b0aeaa;border-radius:2px;padding:0 2px;height:25px;outline:0}
.timerow .fld{width:108px;margin-right:5px}
.exp-box{margin-left:510px;display:flex;align-items:center;gap:5px}
.status{display:flex;align-items:center;height:28px;padding-left:2px;flex:none;white-space:nowrap}
.reset{width:46px;height:24px}
.hint{margin-left:7px}
.fps{margin-left:auto;margin-right:25px}

.under{position:absolute;left:1920px;top:1062px;width:1920px;height:18px;background:linear-gradient(#9d9b97,#d8d5d0 30%,#efece7 80%)}
.dr{left:1920px;top:28px;width:1920px;height:1034px;display:flex;flex-direction:column;box-shadow:-3px 0 12px rgba(0,0,0,.45);border-bottom:1px solid #b4b2ae;z-index:1}
.drtitle{height:23px;flex:none;display:flex;align-items:center;padding-left:1px;gap:1px;white-space:nowrap}
.drbtns{margin-left:auto;display:flex;align-items:center;margin-right:4px}
.drbtns .d{width:15px;height:15px;background:#d8d6d2;border:1px solid #aaa;border-radius:2px;text-align:center;line-height:13px;font-size:11px}
.drbtns .q{width:16px;height:16px;border-radius:50%;background:radial-gradient(#7db9f2,#2678cf);color:#fff;text-align:center;line-height:16px;font-weight:700;margin-right:12px}
.drbtns .m{width:12px;text-align:center;margin-right:6px;font-weight:700}
.drbtns .o{width:12px;text-align:center}
.drbody{height:752px;flex:none;display:flex}
.side{width:179px;flex:none;padding:0 15px 0 9px;display:flex;flex-direction:column}
.filter{display:flex;align-items:center;height:24px;margin:17px 0 0 9px;gap:7px;white-space:nowrap}
.filter .fld{width:77px;height:24px}
.sidebtns{display:flex;gap:6px;margin-top:11px}
.sidebtns .btn{width:75px}
.sidebtns .btn+.btn{width:74px}
.nodes{list-style:none;margin:6px 0 0;padding:0;height:628px;width:155px;background:#fff;border:1px solid #aaa8a4;white-space:nowrap;overflow:hidden}
.nodes li{height:17px;line-height:17px;padding-left:23px;position:relative}
.nodes li.sel{background:#308cc6;color:#fff;height:18px;margin-bottom:0}
.nodes li.kid{padding-left:43px}
.nodes li i{position:absolute;left:7px;top:5px}
.nodes li i.tri-d{top:6px;left:6px}
.refresh{width:155px;margin-top:6px}
.group{width:1741px;flex:none;height:751px;border:1px solid #b4b2ae;border-right:0;padding:8px 2px 0 8px;display:flex}
.params{width:1707px;height:741px;background:#fff;flex:none}
.ptop{height:36px;display:flex;align-items:flex-start;padding-top:3px;gap:6px}
.ib{width:47px;height:24px;display:flex;align-items:center;justify-content:center}
.ptitle{flex:1;text-align:center;padding-right:104px;margin-top:3px}
.close{width:35px;margin:-3px 1px 0 0;color:#333;font-size:10px}
.p{height:26px;display:flex;align-items:center;padding:0 10px 0 9px;white-space:nowrap}
.pn{width:150px;flex:none}
.mn{width:29px;flex:none;text-align:right}
.sl{flex:1;height:5px;margin-left:8px;background:#d6d4d0;border:1px solid #b6b3ae;border-radius:3px;position:relative}
.sl i{position:absolute;left:-1px;top:-1px;height:5px;width:calc(6px + var(--v)*(100% - 12px));background:linear-gradient(#1f6ea9,#3fa3e6 35%,#3b9de0 70%,#1f6ea9);border-radius:2px}
.sl b{position:absolute;top:-5px;left:calc(var(--v)*(100% - 12px) - 1px);width:13px;height:13px;background:linear-gradient(#fbfbfa,#ecebe8);border:1px solid #bab8b4;border-radius:3px}
.mx{margin:0 8px;min-width:28px;flex:none}
.pv{width:107px;height:20px;flex:none;border-radius:2px;padding:0 2px}
.vsb{width:15px;margin-left:8px;height:741px;flex:none;background:#dfdcd8;border:1px solid #c9c6c2;display:flex;flex-direction:column;align-items:center;justify-content:space-between;padding:6px 0}
.tri-u{width:0;height:0;border:5px solid transparent;border-bottom:5px solid #555;border-top:0}
.tri-d2{width:0;height:0;border:5px solid transparent;border-top:5px solid #555;border-bottom:0}
.track{flex:1}
.msg{margin-top:8px;height:250px;background:#fff;border:1px solid #aaa8a4;margin-right:2px;padding:3px 4px}
```
